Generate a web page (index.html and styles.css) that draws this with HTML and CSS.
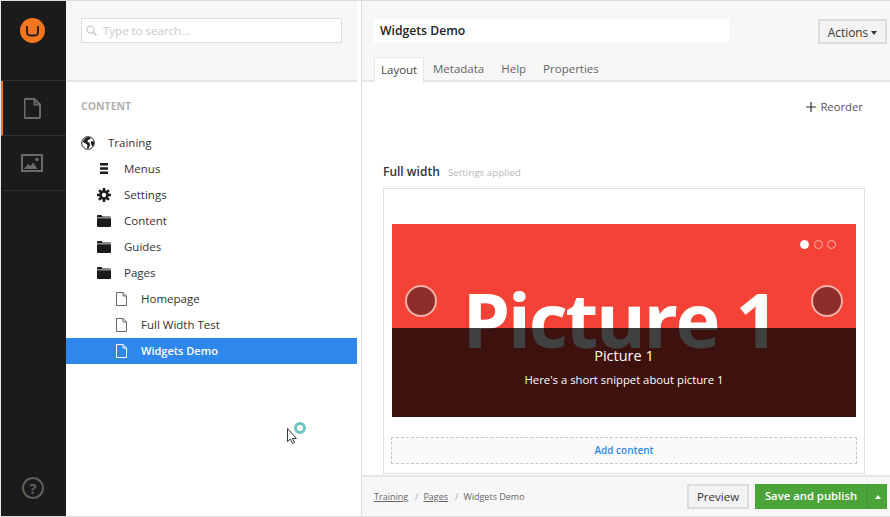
FILE: index.html
```html
<!DOCTYPE html>
<html lang="en">
<head>
    <meta charset="UTF-8">
    <title>Widgets Demo</title>
    <link rel="stylesheet" href="styles.css">
</head>
<body>
    <div class="app">
        <!-- Main dark nav -->
        <nav class="sidebar">
            <div class="logo-cell">
                <svg width="25" height="25" viewBox="0 0 25 25"><circle cx="12.500" cy="12.500" r="12.500" fill="#f5761f"/><path d="M7 8v6q0 3.500 3.500 3.500h4q3.500 0 3.500-3.500v-6" fill="none" stroke="#1b1b1b" stroke-width="1.800"/></svg>
            </div>
            <div class="nav-cell nav-active">
                <svg width="17" height="21" viewBox="0 0 17 21"><path d="M1.500 1h9l5.500 5.500v12.500a1 1 0 0 1-1 1h-13.500a1 1 0 0 1-1-1v-17a1 1 0 0 1 1-1zM10.500 1v5.500h5.500" fill="none" stroke="#6a6a6a" stroke-width="2"/></svg>
            </div>
            <div class="nav-cell">
                <svg width="22" height="18" viewBox="0 0 22 18"><rect x="1" y="1" width="20" height="16" fill="none" stroke="#6a6a6a" stroke-width="2"/><circle cx="16" cy="5.500" r="1.800" fill="#6a6a6a"/><path d="M3 15l4-5 2.500 2 2.500-3.500 4.500 6.500z" fill="#6a6a6a"/></svg>
            </div>
            <div class="help-cell">
                <span class="help-icon">?</span>
            </div>
        </nav>

        <!-- Content tree -->
        <section class="tree-panel">
            <div class="tree-head">
                <div class="search-box">
                    <svg width="11" height="11" viewBox="0 0 12 12"><circle cx="5" cy="5" r="3.800" fill="none" stroke="#cfcfcf" stroke-width="1.500"/><path d="M8 8l3.500 3.500" stroke="#cfcfcf" stroke-width="1.800"/></svg>
                    <span>Type to search...</span>
                </div>
            </div>
            <div class="tree-body">
                <h3 class="tree-title">CONTENT</h3>
                <ul class="tree">
                    <li class="tree-row level-0">
                        <span class="tree-icon"><svg width="14" height="14" viewBox="0 0 14 14"><circle cx="7" cy="7" r="6.300" fill="#fff" stroke="#222" stroke-width="1"/><path d="M2 5l3-3.500 4-.5 .5 2-2.500 1-.5 2 2 .5 .5 3-2 3.500-1-1 .5-3-2-1.500-2.500-1.500zM10 5l3 .5v3l-1.500 2-1.500-2.500z" fill="#222"/></svg></span>
                        <span>Training</span>
                    </li>
                    <li class="tree-row level-1">
                        <span class="tree-icon"><svg width="10" height="11" viewBox="0 0 10 11"><path d="M1 0h8v2.500h-8zM1 4.200h8v2.500h-8zM1 8.500h8v2.500h-8z" fill="#1b1b1b"/></svg></span>
                        <span>Menus</span>
                    </li>
                    <li class="tree-row level-1">
                        <span class="tree-icon"><svg width="14" height="14" viewBox="0 0 14 14"><circle cx="7" cy="7" r="3.500" fill="none" stroke="#1b1b1b" stroke-width="2.600"/><path d="M5.700 0h2.600v3h-2.600zM5.700 11h2.600v3h-2.600zM0 5.700h3v2.600h-3zM11 5.700h3v2.600h-3zM1.200 3l1.800-1.800 2 2-1.800 1.800zM9 10.800l1.800-1.800 2 2-1.800 1.800zM11 1.200l1.800 1.800-2 2-1.800-1.800zM3 9l1.800 1.800-2 2-1.800-1.800z" fill="#1b1b1b"/></svg></span>
                        <span>Settings</span>
                    </li>
                    <li class="tree-row level-1">
                        <span class="tree-icon"><svg width="14" height="12" viewBox="0 0 14 12"><path d="M0 1a1 1 0 0 1 1-1h3.500l1 1.500h7.500a1 1 0 0 1 1 1h-14zM0 3.200h14v7.800a1 1 0 0 1-1 1h-12a1 1 0 0 1-1-1z" fill="#1b1b1b"/></svg></span>
                        <span>Content</span>
                    </li>
                    <li class="tree-row level-1">
                        <span class="tree-icon"><svg width="14" height="12" viewBox="0 0 14 12"><path d="M0 1a1 1 0 0 1 1-1h3.500l1 1.500h7.500a1 1 0 0 1 1 1h-14zM0 3.200h14v7.800a1 1 0 0 1-1 1h-12a1 1 0 0 1-1-1z" fill="#1b1b1b"/></svg></span>
                        <span>Guides</span>
                    </li>
                    <li class="tree-row level-1">
                        <span class="tree-icon"><svg width="14" height="12" viewBox="0 0 14 12"><path d="M0 1a1 1 0 0 1 1-1h3.500l1 1.500h7.500a1 1 0 0 1 1 1h-14zM0 3.200h14v7.800a1 1 0 0 1-1 1h-12a1 1 0 0 1-1-1z" fill="#1b1b1b"/></svg></span>
                        <span>Pages</span>
                    </li>
                    <li class="tree-row level-2">
                        <span class="tree-icon"><svg width="11" height="14" viewBox="0 0 11 14"><path d="M.5 .5h6.500l3.500 3.500v9.500h-10zM7 .5v3.500h3.500" fill="#fff" stroke="#666"/></svg></span>
                        <span>Homepage</span>
                    </li>
                    <li class="tree-row level-2">
                        <span class="tree-icon"><svg width="11" height="14" viewBox="0 0 11 14"><path d="M.5 .5h6.500l3.500 3.500v9.500h-10zM7 .5v3.500h3.500" fill="#fff" stroke="#666"/></svg></span>
                        <span>Full Width Test</span>
                    </li>
                    <li class="tree-row level-2 selected">
                        <span class="tree-icon"><svg width="11" height="14" viewBox="0 0 11 14"><path d="M.5 .5h6.500l3.500 3.500v9.500h-10zM7 .5v3.500h3.500" fill="none" stroke="#fff"/></svg></span>
                        <span>Widgets Demo</span>
                    </li>
                </ul>
            </div>
        </section>

        <!-- Editor -->
        <main class="editor">
            <header class="editor-head">
                <div class="title-row">
                    <div class="page-title">Widgets Demo</div>
                    <button class="btn actions-btn">Actions <i class="caret-down"></i></button>
                </div>
                <div class="tabs">
                    <span class="tab tab-active">Layout</span>
                    <span class="tab">Metadata</span>
                    <span class="tab">Help</span>
                    <span class="tab">Properties</span>
                </div>
            </header>

            <div class="editor-body">
                <div class="reorder-row">
                    <svg width="10" height="10" viewBox="0 0 10 10"><path d="M4.400 0h1.200v10h-1.200zM0 4.400h10v1.200h-10z" fill="#333"/></svg>
                    <span>Reorder</span>
                </div>
                <div class="section-label">
                    <strong>Full width</strong>
                    <span>Settings applied</span>
                </div>
                <div class="grid-box">
                    <div class="carousel">
                        <div class="big-text">Picture 1</div>
                        <span class="arrow arrow-left"></span>
                        <span class="arrow arrow-right"></span>
                        <div class="dots">
                            <i class="dot dot-on"></i><i class="dot"></i><i class="dot"></i>
                        </div>
                        <div class="caption">
                            <div class="caption-title">Picture 1</div>
                            <div class="caption-text">Here's a short snippet about picture 1</div>
                        </div>
                    </div>
                    <div class="add-content">Add content</div>
                </div>
            </div>

            <footer class="editor-foot">
                <div class="crumbs">
                    <a>Training</a><span class="sep">/</span><a>Pages</a><span class="sep">/</span><span>Widgets Demo</span>
                </div>
                <button class="btn preview-btn">Preview</button>
                <div class="save-group">
                    <span class="save-main">Save and publish</span>
                    <span class="save-caret"><i class="caret-up"></i></span>
                </div>
            </footer>
        </main>

        <!-- Busy mouse pointer from the capture -->
        <svg class="pointer" width="22" height="24" viewBox="0 0 22 24">
            <circle cx="14" cy="7" r="4.500" fill="none" stroke="#6cc4bc" stroke-width="3"/>
            <path d="M1.500 7.500v13l3-2.500 2 4.500 2-1-2-4h4z" fill="#fff" stroke="#2b3a3a" stroke-width="1"/>
        </svg>
    </div>
</body>
</html>
```
FILE: styles.css
```css
* {
    box-sizing: border-box;
}

html, body {
    margin: 0;
    padding: 0;
    height: 100%;
    overflow: hidden;
}

body {
    font-family: "Open Sans", "Liberation Sans", sans-serif;
    font-size: 12px;
    color: #333;
    background-color: #fff;
}

.app {
    position: relative;
    display: flex;
    width: 890px;
    height: 517px;
    border: 1px solid #dcdcdc;
    border-right: 0;
    border-left-color: #e8e8e8;
}

/* dark nav */
.sidebar {
    display: flex;
    flex-direction: column;
    width: 65px;
    flex-shrink: 0;
    background-color: #1b1b1b;
}

.logo-cell {
    height: 80px;
    padding: 17px 2px 0 0;
    display: flex;
    justify-content: center;
    align-items: flex-start;
    border-bottom: 1px solid #303030;
}

.nav-cell {
    height: 55px;
    display: flex;
    align-items: center;
    justify-content: center;
    padding-right: 5px;
    border-bottom: 1px solid #303030;
    border-left: 2px solid transparent;
}

.nav-active {
    border-left-color: #f5761f;
}

.help-cell {
    margin-top: auto;
    padding: 0 1px 17px 0;
    display: flex;
    justify-content: center;
}

.help-icon {
    width: 22px;
    height: 22px;
    border: 2px solid #5f5f5f;
    border-radius: 50%;
    color: #5f5f5f;
    font-size: 15px;
    font-weight: 700;
    line-height: 18px;
    text-align: center;
}

/* tree */
.tree-panel {
    width: 291px;
    flex-shrink: 0;
    display: flex;
    flex-direction: column;
}

.tree-head {
    height: 81px;
    padding: 17px 15px 0 15px;
    background-color: #f7f7f7;
    border-bottom: 2px solid #e6e6e6;
}

.search-box {
    display: flex;
    align-items: center;
    gap: 6px;
    width: 261px;
    height: 25px;
    padding-left: 4px;
    background-color: #fff;
    border: 1px solid #dfdfdf;
    color: #c8c8c8;
    font-size: 11.500px;
}

.tree-title {
    margin: 17px 0 17px 15px;
    font-size: 10.500px;
    font-weight: 700;
    color: #b0b0b0;
    line-height: 14px;
}

.tree {
    list-style: none;
    margin: 0;
    padding: 0;
}

.tree-row {
    display: flex;
    align-items: center;
    height: 26px;
    padding-bottom: 1px;
    font-size: 11.500px;
    color: #333;
}

.tree-icon {
    display: flex;
    justify-content: center;
    width: 14px;
    margin-right: 13px;
}

.level-0 {
    padding-left: 15px;
}

.level-1 {
    padding-left: 31px;
}

.level-2 {
    padding-left: 48px;
}

.selected {
    background-color: #2e88eb;
    color: #fff;
    font-weight: 600;
    font-size: 11px;
}

/* editor */
.editor {
    position: relative;
    flex: 1;
    min-width: 0;
    display: flex;
    flex-direction: column;
    border-left: 4px solid #fff;
    box-shadow: inset 1px 0 0 #dcdcdc;
    padding-left: 1px;
}

.editor-head {
    height: 81px;
    background-color: #f7f7f7;
    border-bottom: 2px solid #e6e6e6;
}

.title-row {
    display: flex;
    align-items: flex-start;
    justify-content: space-between;
    padding: 18px 3px 0 12px;
}

.page-title {
    width: 355px;
    height: 24px;
    padding-left: 6px;
    background-color: #fff;
    font-size: 12.200px;
    font-weight: 600;
    line-height: 24px;
    color: #222;
}

.btn {
    font-family: inherit;
    background-color: #f3f3f3;
    border: 2px solid #dcdcdc;
    color: #333;
    padding: 0;
}

.actions-btn {
    width: 69px;
    height: 25px;
    font-size: 11.800px;
}

.caret-down, .caret-up {
    display: inline-block;
    width: 0;
    height: 0;
    border-left: 3.500px solid transparent;
    border-right: 3.500px solid transparent;
    vertical-align: middle;
}

.caret-down {
    border-top: 4px solid #333;
}

.caret-up {
    border-bottom: 4px solid #fff;
}

.tabs {
    display: flex;
    padding: 13px 0 0 12px;
}

.tab {
    height: 25px;
    padding: 0 8px 0 9px;
    line-height: 24px;
    font-size: 11.500px;
    color: #666;
}

.tab-active {
    width: 50px;
    padding: 0 0 0 6px;
    height: 26px;
    background-color: #fff;
    border: 1px solid #e6e6e6;
    border-bottom: 0;
    color: #444;
}

.editor-body {
    flex: 1;
    min-height: 0;
    padding: 0 25px 0 21px;
    overflow: hidden;
}

.reorder-row {
    display: flex;
    justify-content: flex-end;
    align-items: center;
    gap: 4px;
    height: 49px;
    margin-right: 2px;
    font-size: 11.300px;
    color: #555;
}

.section-label {
    margin-top: 30px;
    height: 27px;
    line-height: 22px;
}

.section-label strong {
    font-size: 12px;
    font-weight: 600;
    color: #333;
    margin-right: 5px;
}

.section-label span {
    font-size: 9.800px;
    color: #b8b8b8;
}

.grid-box {
    height: 286px;
    padding: 35px 8px 0 8px;
    border: 1px solid #e0e0e0;
}

.carousel {
    position: relative;
    height: 193px;
    background-color: #f44336;
    overflow: hidden;
}

.big-text {
    text-align: center;
    font-size: 76px;
    font-weight: 700;
    letter-spacing: -2.400px;
    line-height: 100px;
    color: #fff;
    padding: 45px 9px 0 0;
    white-space: nowrap;
}

.arrow {
    position: absolute;
    top: 61px;
    width: 32px;
    height: 32px;
    border-radius: 50%;
    background-color: #8c2f2a;
    border: 2px solid #fbb1a8;
}

.arrow-left {
    left: 13px;
}

.arrow-right {
    right: 13px;
}

.dots {
    position: absolute;
    top: 16px;
    right: 20px;
    display: flex;
    gap: 4.500px;
}

.dot {
    width: 9px;
    height: 9px;
    border-radius: 50%;
    border: 1px solid #fbb1a8;
}

.dot-on {
    background-color: #fff;
    border-color: #fff;
}

.caption {
    position: absolute;
    left: 0;
    right: 0;
    bottom: 0;
    height: 89px;
    background-color: rgba(0, 0, 0, 0.75);
    color: #fff;
    text-align: center;
    padding-top: 18px;
}

.caption-title {
    font-size: 14.500px;
    line-height: 20px;
}

.caption-text {
    font-size: 11.300px;
    line-height: 16px;
    margin-top: 6px;
}

.add-content {
    margin: 20px -1px 0 -1px;
    height: 27px;
    background-color: #fafafa;
    border: 1px dashed #c8c8c8;
    text-align: center;
    line-height: 25px;
    font-size: 10px;
    font-weight: 600;
    color: #2e88eb;
}

.editor-foot {
    height: 41px;
    display: flex;
    align-items: center;
    padding: 0 3px 0 12px;
    background-color: #f7f7f7;
    border-top: 2px solid #e6e6e6;
}

.crumbs {
    flex: 1;
    font-size: 9px;
    color: #666;
}

.crumbs a {
    text-decoration: underline;
}

.sep {
    margin: 0 5px 0 7px;
    color: #aaa;
}

.preview-btn {
    width: 62px;
    height: 25px;
    font-size: 11.500px;
    margin-right: 6px;
}

.save-group {
    display: flex;
    width: 132px;
    height: 25px;
    background-color: #4ba43a;
    color: #fff;
    font-size: 11.300px;
    font-weight: 600;
    line-height: 24px;
}

.save-main {
    flex: 1;
    text-align: center;
}

.save-caret {
    width: 20px;
    display: flex;
    align-items: center;
    justify-content: center;
    border-left: 1px solid #43923a;
}

.pointer {
    position: absolute;
    left: 285px;
    top: 420px;
}
```
